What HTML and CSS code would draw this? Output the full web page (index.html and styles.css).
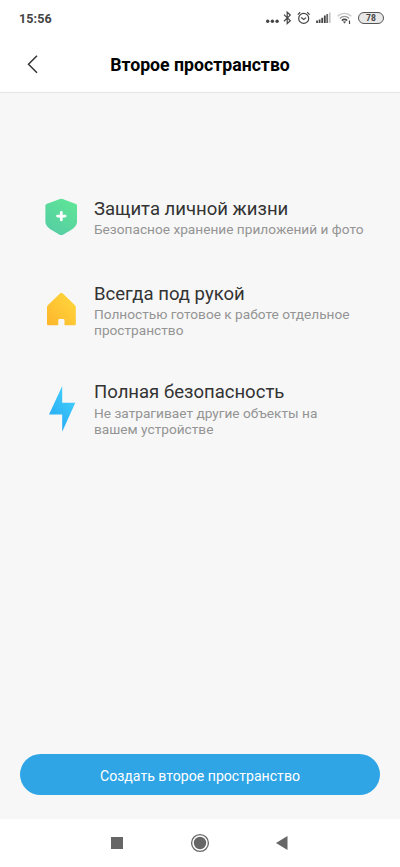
FILE: index.html
```html
<!DOCTYPE html>
<html lang="ru">
<head>
<meta charset="utf-8">
<title>Второе пространство</title>
<link rel="stylesheet" href="styles.css">
</head>
<body>
<div class="screen">
  <div class="status">
    <span class="clock">15:56</span>
    <div class="indicators">
      <svg width="92" height="20" viewBox="262 8 92 20" fill="none" stroke="#444" stroke-width="1.2">
        <g fill="#444" stroke="none"><circle cx="267.7" cy="21.3" r="1.7"/><circle cx="272.4" cy="21.3" r="1.7"/><circle cx="277.1" cy="21.3" r="1.7"/></g>
        <path d="M284 14.6l6.3 6.2-3.1 2.9V12.2l3.1 2.9-6.3 6.2"/>
        <circle cx="303.7" cy="18.4" r="5"/>
        <path d="M297.8 14.6l2.4-2.3M309.6 14.6l-2.4-2.3M301.2 17.6l2.5 1.9 2.4-1.9"/>
        <path stroke-width="1.8" d="M317 23v-2.4M319.6 23v-3.6M322.2 23v-5.3M324.8 23v-7.4"/>
        <path stroke="#666" stroke-width="1.8" d="M327.2 23v-9"/>
        <path stroke="#c4c4c4" stroke-width="1.6" d="M329.8 23V12.4"/>
        <path stroke="#c8c8c8" stroke-width="1.4" d="M337.6 16.2c4-3.8 9.8-3.800 13.800 0"/>
        <path stroke="#999" stroke-width="1.4" d="M339.8 18.400c2.800-2.500 6.600-2.500 9.400 0"/>
        <path stroke-width="1.6" d="M341.800 20.500c1.600-1.400 3.800-1.400 5.400 0"/>
        <path fill="#444" stroke="none" d="M342.800 21.600h3.400l-1.700 2z"/>
        <path stroke-width="1.200" d="M349.500 20.500v3.500"/>
      </svg>
      <span class="battery">78</span>
    </div>
  </div>
  <header class="header">
    <svg class="back" width="12" height="20" viewBox="0 0 12 20" fill="none" stroke="#333" stroke-width="1.5"><path d="M11 1.7L2.500 10.200l8.500 8.500"/></svg>
    <h1>Второе пространство</h1>
  </header>
  <main class="content">
    <section class="feature">
      <svg class="icon" width="50" height="50" viewBox="37 192 50 50">
        <defs><linearGradient id="g1" x1="0.8" y1="0" x2="0.2" y2="1"><stop offset="0" stop-color="#5fe596"/><stop offset="1" stop-color="#55cda4"/></linearGradient></defs>
        <path fill="url(#g1)" d="M60 198.900q1.300-.5 2.600 0l13.400 5q1 .5 1 1.700v15.800c0 4-3 6.500-6 8.500l-7.600 4.500q-2.100 1.100-4.200 0l-7.600-4.500c-3-2-6.200-4.500-6.200-8.500v-15.800q0-1.200 1-1.700z"/>
        <path stroke="#fff" stroke-width="2.8" stroke-linecap="round" d="M61.300 212.300v7.600M57.500 216.100h7.600"/>
      </svg>
      <div class="text"><h2>Защита личной жизни</h2><p>Безопасное хранение приложений и фото</p></div>
    </section>
    <section class="feature">
      <svg class="icon" width="50" height="50" viewBox="37 285 50 50">
        <defs><linearGradient id="g2" x1="1" y1="0" x2="0" y2="1"><stop offset="0" stop-color="#ffda3d"/><stop offset="1" stop-color="#fdb52c"/></linearGradient></defs>
        <path fill="url(#g2)" d="M60.200 293.200q1.200-1 2.400 0l12.400 12q.800.800.800 2v17q0 1.100-1.100 1.100h-10.200v-5.100q0-1.100-1.100-1.100h-4q-1.100 0-1.100 1.100v5.100h-10.200q-1.100 0-1.100-1.100v-17q0-1.200.800-2z"/>
      </svg>
      <div class="text"><h2>Всегда под рукой</h2><p>Полностью готовое к работе отдельное<br>пространство</p></div>
    </section>
    <section class="feature">
      <svg class="icon" width="50" height="50" viewBox="37 383.500 50 50">
        <defs><linearGradient id="g3" x1="0.8" y1="0" x2="0.2" y2="1"><stop offset="0" stop-color="#48d3fb"/><stop offset="1" stop-color="#22a6f4"/></linearGradient></defs>
        <path fill="url(#g3)" d="M62.200 385.500v16.800h13.100L62.200 431.300v-17.200H49z"/>
      </svg>
      <div class="text"><h2>Полная безопасность</h2><p>Не затрагивает другие объекты на<br>вашем устройстве</p></div>
    </section>
    <button class="create">Создать второе пространство</button>
  </main>
  <nav class="nav">
    <svg width="20" height="20" viewBox="0 0 20 20" fill="#666"><path d="M4 4h12v12H4z"/></svg>
    <svg width="20" height="20" viewBox="0 0 20 20" fill="#666"><circle cx="10" cy="10" r="6.2"/><circle cx="10" cy="10" r="8.4" fill="none" stroke="#666" stroke-width="1.3"/></svg>
    <svg width="20" height="20" viewBox="0 0 20 20" fill="#666"><path d="M4 10l11.500-7v14z"/></svg>
  </nav>
</div>
</body>
</html>
```
FILE: styles.css
```css
* { box-sizing: border-box; }
body { margin: 0; font-family: Roboto, sans-serif; background: #fff; }
h1, h2, p { margin: 0; font-weight: 400; }
svg { display: block; flex: none; }
.screen { width: 400px; height: 867px; display: flex; flex-direction: column; }
.status { height: 36px; display: flex; justify-content: space-between; align-items: center; padding: 0 16px 0 19px; }
.clock { font-size: 12.5px; font-weight: 700; color: #444; letter-spacing: .1px; }
.indicators { display: flex; align-items: center; gap: 4px; }
.battery { width: 26px; height: 12px; border: 1px solid #555; border-radius: 6px; background: #e8e8e8; font-size: 8.5px; line-height: 10px; font-weight: 700; color: #444; text-align: center; }
.header { height: 57px; border-bottom: 1px solid #e6e6e6; display: grid; grid-template-columns: 84px 1fr 84px; align-items: center; }
.back { margin-left: 26px; }
.header h1 { padding-top: 2px; font-size: 17.7px; font-weight: 700; color: #000; text-align: center; white-space: nowrap; }
.content { flex: 1; background: #f7f7f7; display: flex; flex-direction: column; padding: 99px 20px 24px; }
.feature { display: flex; align-items: center; gap: 7px; padding-left: 17px; margin-bottom: 42px; }
.feature:first-child { margin-bottom: 40px; }
.text { white-space: nowrap; }
.text h2 { font-size: 18.55px; line-height: 24px; color: #333; }
.text p { font-size: 13.68px; line-height: 16px; color: #949494; }
.feature:nth-child(3) p { margin-top: 1px; }
.create { margin-top: auto; height: 41px; padding: 2px 0 0; border: 0; border-radius: 21px; background: #2fa5e6; color: #fff; font: 400 14.1px Roboto, sans-serif; }
.nav { height: 48px; display: flex; justify-content: space-between; align-items: center; padding: 0 108px 0 107px; }
```
